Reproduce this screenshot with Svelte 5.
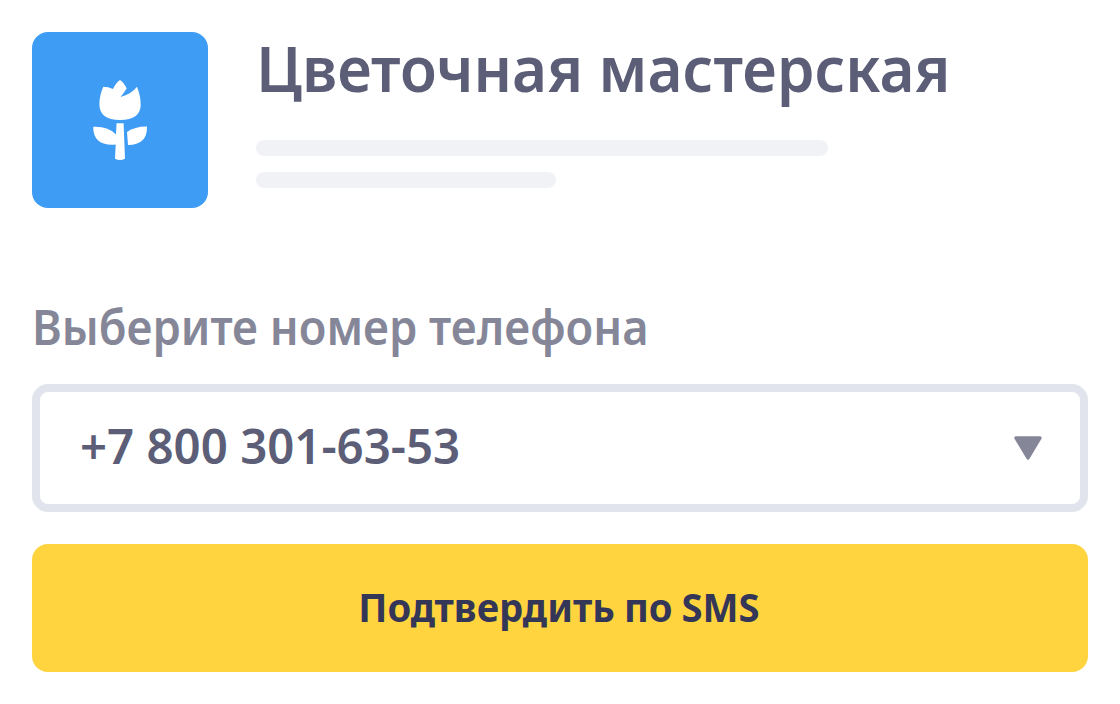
<script>
  const shop = 'Цветочная мастерская';
  const phone = '+7 800 301-63-53';
</script>

<main>
  <header>
    <div class="logo">
      <svg width="176" height="176" viewBox="0 0 176 176" fill="#fff" aria-hidden="true">
        <path d="M71.3 54.8 Q76 54.8 81 57 Q84 50.7 88 48 Q92 50.7 94.7 56.5 Q91.6 61.4 88.5 65 Q99.5 62 105 54.7 Q108.7 64 108.7 72.5 Q108.7 88 88 88 Q67.4 88 67.4 72 Q67.4 63.5 71.3 54.8Z" />
        <path d="M84.5 91.3 H91.6 L93 126.7 Q88 129.3 83 126.7 L83.7 112.6 Q61.2 114.5 61.2 94.8 Q76.5 94.2 84 102.5Z" />
        <path d="M95 100 Q103 94.3 115 94.5 Q115.4 113 96 113Z" />
      </svg>
    </div>
    <div class="info">
      <h1>{shop}</h1>
      <div class="line long"></div>
      <div class="line short"></div>
    </div>
  </header>

  <div class="label">Выберите номер телефона</div>
  <div class="select">
    <span>{phone}</span>
    <svg width="28" height="24" viewBox="0 0 28 24" aria-hidden="true">
      <path d="M2 2 H26 L14 22Z" fill="#858799" stroke="#858799" stroke-width="3.4" stroke-linejoin="round" />
    </svg>
  </div>
  <button><span>Подтвердить по SMS</span></button>
</main>

<style>
  :global(body) {
    margin: 0;
    background: #fff;
  }
  main {
    box-sizing: border-box;
    width: 1120px;
    height: 704px;
    padding: 32px;
    display: flex;
    flex-direction: column;
    font-family: 'Noto Sans', sans-serif;
    font-weight: 600;
    color: #5c5e78;
    white-space: nowrap;
  }
  header {
    display: flex;
    gap: 48px;
    height: 176px;
  }
  .logo {
    width: 176px;
    height: 176px;
    border-radius: 16px;
    background: #3f9cf4;
  }
  .logo svg {
    display: block;
  }
  .info {
    display: flex;
    flex-direction: column;
    gap: 16px;
  }
  h1 {
    margin: 0 0 12px;
    height: 80px;
    font-size: 64px;
    line-height: 72px;
    font-weight: 600;
    transform: scaleX(0.942);
    transform-origin: 0 0;
  }
  .line {
    height: 16px;
    border-radius: 8px;
    background: #f1f2f6;
  }
  .long {
    width: 572px;
  }
  .short {
    width: 300px;
  }
  .label {
    margin-top: 87px;
    height: 89px;
    font-size: 48px;
    line-height: 63px;
    color: #858799;
    transform: scaleX(0.943);
    transform-origin: 0 0;
  }
  .select {
    box-sizing: border-box;
    height: 128px;
    padding: 0 38px 0 40px;
    border: 8px solid #e1e4ec;
    border-radius: 16px;
    display: flex;
    align-items: center;
    justify-content: space-between;
    font-size: 48px;
    line-height: 64px;
  }
  .select span {
    padding-bottom: 4px;
    transform: scaleX(0.987);
    transform-origin: 0 0;
  }
  button {
    margin-top: 32px;
    height: 128px;
    padding: 0 2px 2px 0;
    border: 0;
    border-radius: 16px;
    background: #ffd43f;
    color: #343657;
    font: 700 40px/56px 'Noto Sans', sans-serif;
  }
  button span {
    display: inline-block;
    word-spacing: -1px;
    transform: scaleX(0.956);
  }
</style>
